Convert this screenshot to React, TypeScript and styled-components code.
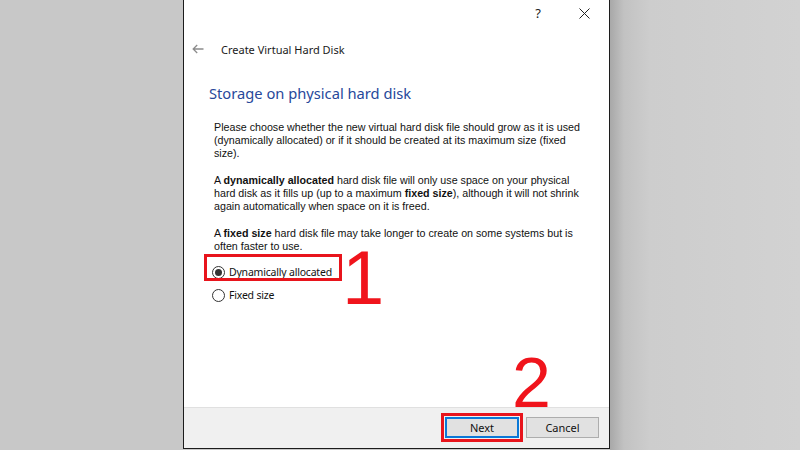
import React from "react";
import styled, { createGlobalStyle } from "styled-components";

const Global = createGlobalStyle`
  html, body { margin: 0; padding: 0; }
  body { width: 800px; height: 450px; overflow: hidden; background: #c9c9c9; }
`;

const Screen = styled.div`
  display: grid;
  grid-template-columns: 183px 427px 1fr;
  height: 450px;
  font-family: "Noto Sans", "Open Sans", sans-serif;
`;

const LeftBackdrop = styled.div`
  background: #c8c8c8;
`;

const RightBackdrop = styled.div`
  background: linear-gradient(90deg, #a8a8a8 0px, #c2c2c2 14px, #cdcdcd 40px, #d2d2d2 100%);
`;

const Dialog = styled.div`
  position: relative;
  display: flex;
  flex-direction: column;
  height: 449px;
  box-sizing: border-box;
  background: #ffffff;
  border-left: 1px solid #1c1c1c;
  border-right: 1px solid #1c1c1c;
  border-bottom: 1px solid #1c1c1c;
`;

const TitleBar = styled.div`
  display: flex;
  justify-content: flex-end;
  align-items: center;
  height: 26px;
  padding-right: 19px;
  gap: 38px;
`;

const HelpGlyph = styled.span`
  font-family: "Noto Sans", sans-serif;
  font-size: 13px;
  color: #222;
  line-height: 26px;
`;

const NavRow = styled.div`
  display: flex;
  align-items: center;
  height: 20px;
  margin-top: 13px;
  padding-left: 8px;
  gap: 17px;
`;

const WizardTitle = styled.span`
  font-size: 11px;
  color: #1a1a1a;
`;

const Heading = styled.h1`
  margin: 23px 0 0 25px;
  font-weight: 400;
  font-size: 14.7px;
  line-height: 22px;
  color: #27489a;
`;

const Body = styled.div`
  margin: 17px 0 0 30px;
  font-family: "Liberation Sans", Arial, sans-serif;
  font-size: 10.7px;
  line-height: 13px;
  color: #111;
`;

const Para = styled.p`
  margin: 0 0 14px 0;
  white-space: nowrap;
  &:last-child { margin-bottom: 0; }
`;

const Options = styled.div`
  display: flex;
  flex-direction: column;
  gap: 3px;
  margin: 9px 0 0 28px;
`;

const RadioRow = styled.label`
  position: relative;
  display: flex;
  align-items: center;
  height: 20px;
  gap: 4px;
  font-size: 10.5px;
  letter-spacing: -0.2px;
  color: #111;
`;

const RadioCircle = styled.span<{ $checked?: boolean }>`
  display: inline-flex;
  align-items: center;
  justify-content: center;
  width: 13px;
  height: 13px;
  box-sizing: border-box;
  border: 1px solid #333;
  border-radius: 50%;
  background: #fff;
  &::after {
    content: "";
    width: 7px;
    height: 7px;
    border-radius: 50%;
    background: ${(p) => (p.$checked ? "#333" : "transparent")};
  }
`;

const HighlightBox = styled.span<{ $w: number; $h: number; $l: number; $t: number }>`
  position: absolute;
  left: ${(p) => p.$l}px;
  top: ${(p) => p.$t}px;
  width: ${(p) => p.$w}px;
  height: ${(p) => p.$h}px;
  box-sizing: border-box;
  border: 3px solid #e8141c;
  pointer-events: none;
`;

const StepNumber = styled.span<{ $l: number; $t: number; $size: number }>`
  position: absolute;
  left: ${(p) => p.$l}px;
  top: ${(p) => p.$t}px;
  font-family: "Liberation Sans", Arial, sans-serif;
  font-size: ${(p) => p.$size}px;
  line-height: 0.76;
  color: #f0141c;
  pointer-events: none;
`;

const Spacer = styled.div`
  flex: 1;
`;

const ButtonBar = styled.div`
  position: relative;
  display: flex;
  justify-content: flex-end;
  align-items: flex-start;
  gap: 7px;
  height: 41px;
  box-sizing: border-box;
  padding: 9px 10px 0 0;
  background: #f0f0f0;
  border-top: 1px solid #e0e0e0;
`;

const Button = styled.button<{ $focused?: boolean }>`
  position: relative;
  width: ${(p) => (p.$focused ? 74 : 73)}px;
  height: 21px;
  box-sizing: border-box;
  padding: 0;
  font-family: "Noto Sans", "Open Sans", sans-serif;
  font-size: 11px;
  color: #111;
  background: #e1e1e1;
  border: ${(p) => (p.$focused ? "2px solid #0a78d7" : "1px solid #adadad")};
  border-radius: 0;
`;

const ButtonFrame = styled.div`
  position: relative;
  display: flex;
`;

function BackArrow() {
  return (
    <svg width="12" height="10" viewBox="0 0 12 10">
      <path d="M11.5 5H1.2M5.2 1L1.2 5l4 4" fill="none" stroke="#8c8c8c" strokeWidth="1.3" />
    </svg>
  );
}

function CloseIcon() {
  return (
    <svg width="11" height="11" viewBox="0 0 11 11">
      <path d="M0.5 0.5L10.5 10.5M10.5 0.5L0.5 10.5" stroke="#222" strokeWidth="1" />
    </svg>
  );
}

export default function App() {
  return (
    <>
      <Global />
      <Screen>
        <LeftBackdrop />
        <Dialog>
          <TitleBar>
            <HelpGlyph>?</HelpGlyph>
            <CloseIcon />
          </TitleBar>
          <NavRow>
            <BackArrow />
            <WizardTitle>Create Virtual Hard Disk</WizardTitle>
          </NavRow>
          <Heading>Storage on physical hard disk</Heading>
          <Body>
            <Para>
              Please choose whether the new virtual hard disk file should grow as it is used
              <br />
              (dynamically allocated) or if it should be created at its maximum size (fixed
              <br />
              size).
            </Para>
            <Para>
              A <b>dynamically allocated</b> hard disk file will only use space on your physical
              <br />
              hard disk as it fills up (up to a maximum <b>fixed size</b>), although it will not shrink
              <br />
              again automatically when space on it is freed.
            </Para>
            <Para>
              A <b>fixed size</b> hard disk file may take longer to create on some systems but is
              <br />
              often faster to use.
            </Para>
          </Body>
          <Options>
            <RadioRow>
              <RadioCircle $checked />
              Dynamically allocated
              <HighlightBox $l={-8} $t={-8} $w={138} $h={27} />
              <StepNumber $l={130} $t={-13} $size={76}>1</StepNumber>
            </RadioRow>
            <RadioRow>
              <RadioCircle />
              Fixed size
            </RadioRow>
          </Options>
          <Spacer />
          <ButtonBar>
            <ButtonFrame>
              <Button $focused>Next</Button>
              <HighlightBox $l={-4} $t={-4} $w={82} $h={29} />
              <StepNumber $l={67} $t={-60} $size={70}>2</StepNumber>
            </ButtonFrame>
            <Button>Cancel</Button>
          </ButtonBar>
        </Dialog>
        <RightBackdrop />
      </Screen>
    </>
  );
}
